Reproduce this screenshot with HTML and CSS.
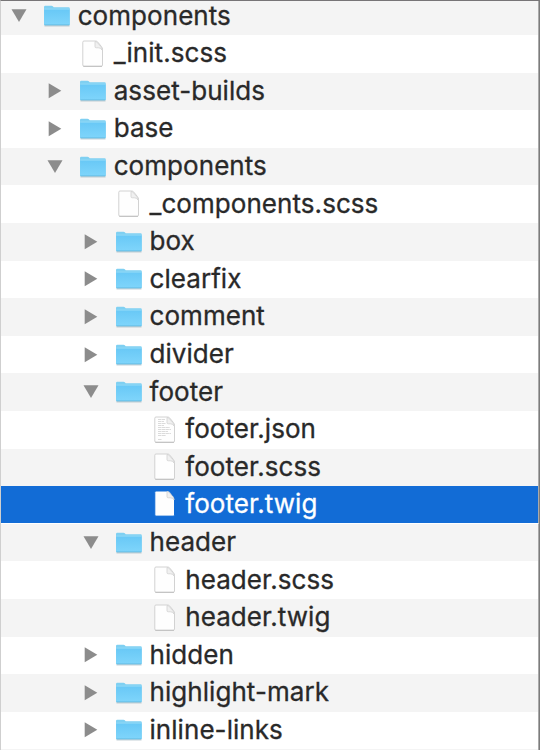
FILE: index.html
```html
<!DOCTYPE html>
<html lang="en">
<head>
<meta charset="utf-8">
<title>components</title>
<link rel="stylesheet" href="styles.css">
</head>
<body>
<svg class="defs" aria-hidden="true">
  <defs>
    <linearGradient id="blue" x1="0" y1="0" x2="0" y2="1"><stop offset="0" stop-color="#68c8f6"/><stop offset="1" stop-color="#7fd5fb"/></linearGradient>
    <symbol id="folder" viewBox="0 0 28 24">
      <path d="M1.500 21.800h25" stroke="#8fa7b2" stroke-opacity=".65" stroke-width="1.200"/>
      <path d="M1 3q0-1.300 1.300-1.300h6.200q.8 0 1.300.6l.9 1h14.800q1.300 0 1.300 1.300v15.600q0 1-1 1H2q-1 0-1-1z" fill="#7fd0f2"/>
      <path d="M1.200 5.200h25.400v15q0 .9-.9.9H2q-.8 0-.8-.9z" fill="url(#blue)"/>
      <path d="M1.200 5.100h25.400" stroke="#9ddffa" stroke-width=".7"/>
      <path d="M1.500 20.800h24.800" stroke="#61b9df" stroke-width=".7"/>
    </symbol>
    <symbol id="file" viewBox="0 0 22 28">
      <path class="edge" d="M2 1h11.500q1.200 0 2.300 1.100l3.600 4.400q1.100 1.400 1.100 3V25q0 1.200-1.200 1.200H2Q.8 26.200.8 25V2.200Q.8 1 2 1z" fill="#fefefe" stroke-width="1"/>
      <path class="base" d="M1.300 26.400h18.700" stroke-width=".8"/>
      <path d="M13 1.500v5.200q0 1.100 1.100 1.100h2.200q2.800 0 3.800 2.200-.2-2-1.400-3.500l-3.400-4q-.9-1-2.300-1z" fill="#f0f0f0" stroke="#cdcdcd" stroke-width=".7"/>
    </symbol>
    <symbol id="text" viewBox="0 0 22 28">
      <use href="#file"/>
      <path d="M4 3.500h7M4 5.500h6M4 7.500h7.500M4 9.500h6M4 11.500h12M4 13.500h13M4 15.500h10M4 17.500h13M4 19.500h8M4 23.500h4" stroke="#d2d2d2" stroke-width=".8" stroke-dasharray="3 .5 4 .4"/>
    </symbol>
    <symbol id="open" viewBox="0 0 16 16"><path d="M.5 1.200h15L8 14z" fill="#8c8c8c"/></symbol>
    <symbol id="closed" viewBox="0 0 16 16"><path d="M1.700.300 14.300 7.800 1.700 15.300z" fill="#8c8c8c"/></symbol>
  </defs>
</svg>
<main class="tree">
  <div class="row first"><svg class="arrow"><use href="#open"/></svg><svg class="folder"><use href="#folder"/></svg><span class="name">components</span></div>
  <div class="row l1"><svg class="file"><use href="#file"/></svg><span class="name">_init.scss</span></div>
  <div class="row l1"><svg class="arrow"><use href="#closed"/></svg><svg class="folder"><use href="#folder"/></svg><span class="name">asset-builds</span></div>
  <div class="row l1"><svg class="arrow"><use href="#closed"/></svg><svg class="folder"><use href="#folder"/></svg><span class="name">base</span></div>
  <div class="row l1"><svg class="arrow"><use href="#open"/></svg><svg class="folder"><use href="#folder"/></svg><span class="name">components</span></div>
  <div class="row l2"><svg class="file"><use href="#file"/></svg><span class="name">_components.scss</span></div>
  <div class="row l2"><svg class="arrow"><use href="#closed"/></svg><svg class="folder"><use href="#folder"/></svg><span class="name">box</span></div>
  <div class="row l2"><svg class="arrow"><use href="#closed"/></svg><svg class="folder"><use href="#folder"/></svg><span class="name">clearfix</span></div>
  <div class="row l2"><svg class="arrow"><use href="#closed"/></svg><svg class="folder"><use href="#folder"/></svg><span class="name">comment</span></div>
  <div class="row l2"><svg class="arrow"><use href="#closed"/></svg><svg class="folder"><use href="#folder"/></svg><span class="name">divider</span></div>
  <div class="row l2"><svg class="arrow"><use href="#open"/></svg><svg class="folder"><use href="#folder"/></svg><span class="name">footer</span></div>
  <div class="row l3"><svg class="file"><use href="#text"/></svg><span class="name">footer.json</span></div>
  <div class="row l3"><svg class="file"><use href="#file"/></svg><span class="name">footer.scss</span></div>
  <div class="row l3 selected"><svg class="file"><use href="#file"/></svg><span class="name">footer.twig</span></div>
  <div class="row l2"><svg class="arrow"><use href="#open"/></svg><svg class="folder"><use href="#folder"/></svg><span class="name">header</span></div>
  <div class="row l3"><svg class="file"><use href="#file"/></svg><span class="name">header.scss</span></div>
  <div class="row l3"><svg class="file"><use href="#file"/></svg><span class="name">header.twig</span></div>
  <div class="row l2"><svg class="arrow"><use href="#closed"/></svg><svg class="folder"><use href="#folder"/></svg><span class="name">hidden</span></div>
  <div class="row l2"><svg class="arrow"><use href="#closed"/></svg><svg class="folder"><use href="#folder"/></svg><span class="name">highlight-mark</span></div>
  <div class="row l2"><svg class="arrow"><use href="#closed"/></svg><svg class="folder"><use href="#folder"/></svg><span class="name">inline-links</span></div>
  <div class="row"></div>
</main>
</body>
</html>
```
FILE: styles.css
```css
* { box-sizing: border-box; }
body { margin: 0; background: #fff; }
.defs { position: absolute; width: 0; height: 0; }
.tree {
  height: 750px;
  overflow: hidden;
  border-top: 1px solid #777577;
  border-left: 1px solid #cfcfcf;
  border-right: 1px solid #7c7c7c;
  font: 400 26px/36px Inter, "Liberation Sans", sans-serif;
  color: #292929;
  --edge: #d2d2d2;
  --base: #b9b9b9;
}
.row {
  display: flex;
  align-items: center;
  height: 37.6px;
  padding-left: 10px;
  border-right: 1px solid #aaa;
  white-space: nowrap;
}
.row:nth-child(odd) { background: #f4f4f4; }
.first { height: 34px; padding-bottom: 3.6px; }
.l1 { padding-left: 46px; }
.l2 { padding-left: 81.8px; }
.l3 { padding-left: 117.6px; }
.arrow { width: 16px; height: 16px; flex: none; }
.folder { width: 28px; height: 24px; flex: none; margin: 0 6.7px 0 16px; }
.file { width: 22px; height: 28px; flex: none; margin: 0 9.7px 0 35px; }
.edge { stroke: var(--edge); }
.base { stroke: var(--base); }
.name {
  letter-spacing: .06px;
  padding-bottom: 1px;
  -webkit-text-stroke: .3px currentColor;
}
.row.selected {
  background: #126cd6;
  color: #fff;
  border-bottom: 1px solid #fff;
  --edge: #126cd6;
  --base: #126cd6;
}
```
